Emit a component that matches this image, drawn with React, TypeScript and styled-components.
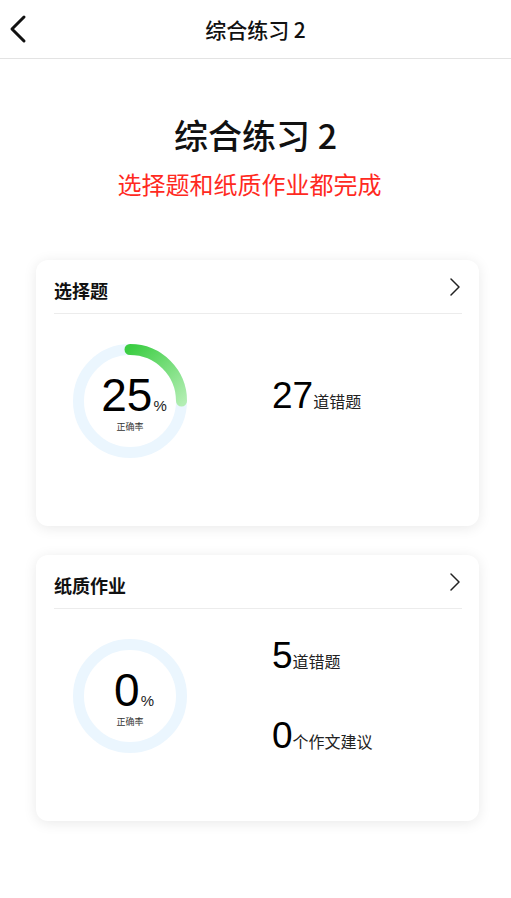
import React from 'react';
import styled, { createGlobalStyle } from 'styled-components';

const GlobalStyle = createGlobalStyle`
  body {
    margin: 0;
    background: #fff;
    font-family: "Liberation Sans", "Noto Sans CJK SC", sans-serif;
    color: #111;
  }
`;

const Page = styled.div`
  width: 511px;
  min-height: 898px;
  background: #fff;
`;

const NavBar = styled.header`
  height: 58px;
  border-bottom: 1px solid #e3e3e3;
  display: grid;
  grid-template-columns: 60px 1fr 60px;
  align-items: center;
`;

const BackButton = styled.button`
  border: none;
  background: none;
  padding: 0 0 0 8px;
  height: 58px;
  display: flex;
  align-items: center;
  cursor: pointer;
`;

const NavTitle = styled.h1`
  margin: 0;
  text-align: center;
  font-family: "Noto Sans CJK SC", sans-serif;
  font-size: 21px;
  font-weight: 500;
  color: #111;
`;

const Hero = styled.section`
  padding-top: 56px;
  text-align: center;
`;

const HeroTitle = styled.h2`
  margin: 0;
  font-family: "Noto Sans CJK SC", sans-serif;
  font-size: 34px;
  line-height: 40px;
  font-weight: 500;
  color: #111;
`;

const HeroNote = styled.p`
  margin: 16px 0 0;
  padding-right: 12px;
  font-size: 24px;
  line-height: 30px;
  color: #ff2a1f;
`;

const Cards = styled.div`
  display: flex;
  flex-direction: column;
  gap: 29px;
  margin: 59px 32px 0 36px;
`;

const Card = styled.div`
  background: #fff;
  border-radius: 12px;
  box-shadow: 0 2px 14px rgba(0, 0, 0, 0.09);
  padding: 0 17px 0 18px;
`;

const CardHead = styled.div`
  display: flex;
  justify-content: space-between;
  padding: 20px 0 9px;
  border-bottom: 1px solid #ececec;
`;

const CardTitle = styled.h3`
  margin: 0;
  font-size: 18px;
  line-height: 24px;
  font-weight: 600;
  color: #111;
`;

const Chevron = styled.svg`
  margin-top: -4px;
`;

const CardBody = styled.div`
  height: 212px;
  padding-top: 30px;
  box-sizing: border-box;
  display: flex;
  align-items: flex-start;
`;

const RingWrap = styled.div`
  margin-left: 19px;
  width: 114px;
  height: 114px;
  display: grid;
  place-items: center;
  & > * {
    grid-area: 1 / 1;
  }
`;

const RingText = styled.div`
  display: flex;
  flex-direction: column;
  align-items: center;
  padding-top: 8px;
`;

const Percent = styled.div`
  display: flex;
  align-items: baseline;
  line-height: 34px;
  margin-left: 8px;
`;

const PercentNum = styled.span`
  font-size: 46px;
  color: #000;
`;

const PercentSign = styled.span`
  font-size: 15px;
  margin-left: 1px;
  color: #222;
`;

const RingLabel = styled.span`
  font-size: 9px;
  line-height: 11px;
  color: #333;
  margin-top: -1px;
`;

const Stats = styled.div<{ $lift: number }>`
  margin-left: 85px;
  margin-top: ${(p) => -p.$lift}px;
  height: 114px;
  display: flex;
  flex-direction: column;
  justify-content: center;
  gap: 40px;
`;

const Stat = styled.div`
  display: flex;
  align-items: baseline;
  height: 40px;
  line-height: 40px;
`;

const StatNum = styled.span`
  font-size: 37px;
  color: #000;
`;

const StatUnit = styled.span`
  font-size: 16px;
  color: #222;
`;

const Ring = ({ value }: { value: number }) => {
  const size = 114;
  const c = size / 2;
  const r = 51.5;
  const angle = (value / 100) * Math.PI * 2;
  const ex = c + r * Math.sin(angle);
  const ey = c - r * Math.cos(angle);
  const large = value > 50 ? 1 : 0;
  return (
    <svg width={size} height={size} viewBox={`0 0 ${size} ${size}`}>
      <defs>
        <linearGradient id="ringGreen" gradientUnits="userSpaceOnUse" x1="57" y1="4" x2="110" y2="60">
          <stop offset="0" stopColor="#3bcd42" />
          <stop offset="1" stopColor="#b3eeb3" />
        </linearGradient>
      </defs>
      <circle cx={c} cy={c} r={r} fill="none" stroke="#ebf6fe" strokeWidth={11} />
      {value > 0 && (
        <path
          d={`M ${c} ${c - r} A ${r} ${r} 0 ${large} 1 ${ex} ${ey}`}
          fill="none"
          stroke="url(#ringGreen)"
          strokeWidth={11}
          strokeLinecap="round"
        />
      )}
    </svg>
  );
};

type StatItem = { num: number; unit: string };

const ResultCard = ({ title, rate, stats }: { title: string; rate: number; stats: StatItem[] }) => (
  <Card>
    <CardHead>
      <CardTitle>{title}</CardTitle>
      <Chevron width="14" height="22" viewBox="0 0 14 22">
        <polyline points="3,3 11,11 3,19" fill="none" stroke="#222" strokeWidth="1.5" strokeLinecap="round" strokeLinejoin="round" />
      </Chevron>
    </CardHead>
    <CardBody>
      <RingWrap>
        <Ring value={rate} />
        <RingText>
          <Percent>
            <PercentNum>{rate}</PercentNum>
            <PercentSign>%</PercentSign>
          </Percent>
          <RingLabel>正确率</RingLabel>
        </RingText>
      </RingWrap>
      <Stats $lift={stats.length === 1 ? 5 : 0}>
        {stats.map((s) => (
          <Stat key={s.unit}>
            <StatNum>{s.num}</StatNum>
            <StatUnit>{s.unit}</StatUnit>
          </Stat>
        ))}
      </Stats>
    </CardBody>
  </Card>
);

export default function App() {
  return (
    <Page>
      <GlobalStyle />
      <NavBar>
        <BackButton aria-label="返回">
          <svg width="20" height="30" viewBox="0 0 20 30">
            <polyline points="16,3 4,15 16,27" fill="none" stroke="#111" strokeWidth="3" strokeLinecap="round" strokeLinejoin="round" />
          </svg>
        </BackButton>
        <NavTitle>综合练习 2</NavTitle>
        <div />
      </NavBar>
      <Hero>
        <HeroTitle>综合练习 2</HeroTitle>
        <HeroNote>选择题和纸质作业都完成</HeroNote>
      </Hero>
      <Cards>
        <ResultCard title="选择题" rate={25} stats={[{ num: 27, unit: '道错题' }]} />
        <ResultCard
          title="纸质作业"
          rate={0}
          stats={[
            { num: 5, unit: '道错题' },
            { num: 0, unit: '个作文建议' },
          ]}
        />
      </Cards>
    </Page>
  );
}
